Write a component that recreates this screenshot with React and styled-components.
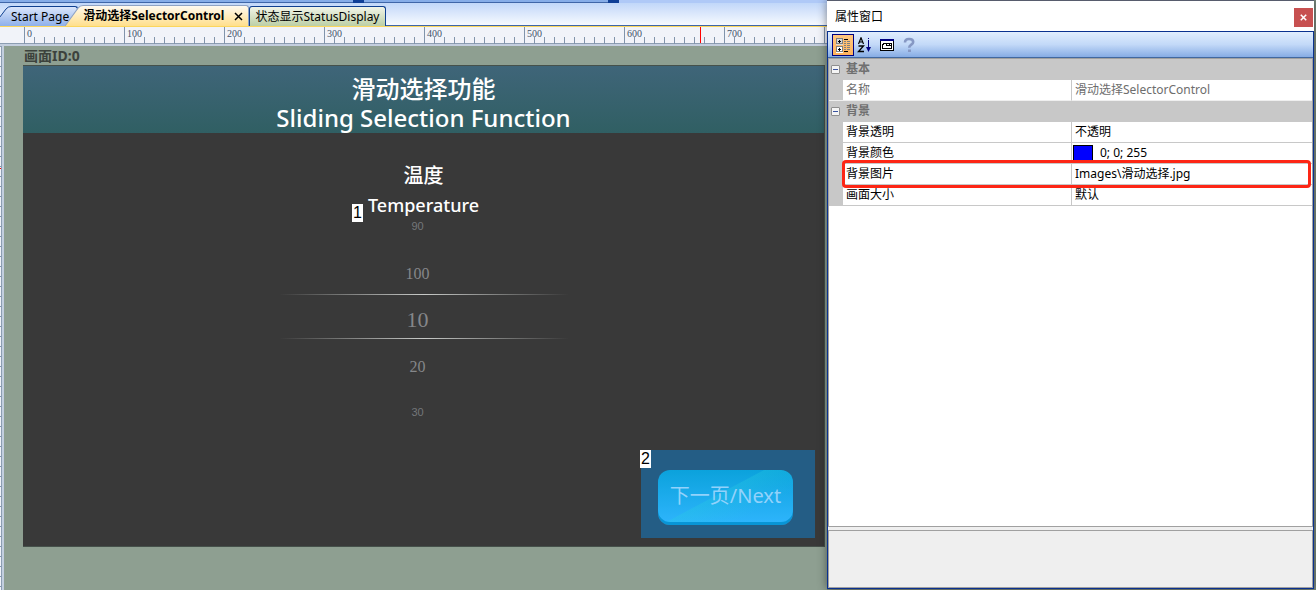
import React, { useState } from "react";
import styled, { createGlobalStyle, css } from "styled-components";

const GlobalStyle = createGlobalStyle`
  * {
    box-sizing: border-box;
  }

  body {
    margin: 0;
    font-family: "Noto Sans", "Noto Sans CJK SC", sans-serif;
    font-size: 12px;
    color: #000;
  }

  button {
    font: inherit;
    color: inherit;
    padding: 0;
    cursor: pointer;
  }
`;

const Page = styled.div`
  display: grid;
  grid-template-columns: minmax(0, 827fr) minmax(0, 487fr);
  min-height: 100vh;
  padding-right: 2px;
  background: #7c8a7f;
`;

const Editor = styled.main`
  display: flex;
  flex-direction: column;
  min-width: 0;
  overflow: hidden;
  background: #8e9f91;
`;

/* ---------- top strip and tabs ---------- */

const TopStrip = styled.div`
  display: flex;
  height: 3px;
  background: #afc9f7;
`;

const StripBar = styled.span`
  flex: ${(props) => props.$grow} 1 0;
  background: #86ade8;
  border-bottom: 1px solid #3f66a8;
`;

const StripGrip = styled.span`
  width: 11px;
  background: #0f3f97;
`;

const StripRest = styled.span`
  flex: 208 1 0;
`;

const TabBar = styled.div`
  display: flex;
  align-items: flex-end;
  height: 24px;
  background: linear-gradient(#c1d7f9, #f9fbff);
  border-bottom: 1px solid #fbd65e;
  box-shadow: inset 0 -1px 0 #3f66a8;
`;

const TabButton = styled.button`
  display: flex;
  height: 20px;
  border: none;
  background: none;
  white-space: nowrap;
  line-height: 18px;
  margin-left: ${(props) => props.$shift || 0}px;

  ${(props) =>
    props.$active &&
    css`
      position: relative;
      height: 21px;
      font-weight: 700;
    `}
`;

const TabEdge = styled.svg`
  display: block;
  flex: none;
  width: 18px;
  height: 100%;
`;

const tabFills = {
  blue: "linear-gradient(#dbe6fb, #8fb0ea)",
  yellow: "linear-gradient(#fffaf0, #ffdf8c)",
  green: "linear-gradient(#f1f4e8, #bccfa5)",
};

const TabBody = styled.span`
  display: flex;
  align-items: center;
  gap: 10px;
  height: 100%;
  padding: 0 ${(props) => props.$padRight || 5}px 0 ${(props) => props.$padLeft || 0}px;
  background: ${(props) => tabFills[props.$tone]};
  border: solid ${(props) => (props.$tone === "yellow" ? "#8fa3c4" : "#0f4090")};
  border-width: 1px 1px 0 ${(props) => (props.$padLeft ? 1 : 0)}px;
  border-radius: ${(props) => (props.$padLeft ? 3 : 0)}px 3px 0 0;
`;

/* ---------- rulers ---------- */

const Ruler = styled.div`
  position: relative;
  display: flex;
  height: 19px;
  padding-left: 24px;
  overflow: hidden;
  background: #f1f3f9;
  border-bottom: 2px solid #c3cede;
  box-shadow: inset 0 -1px 0 #8c9db2;
`;

const RulerStep = styled.span`
  flex: none;
  width: 100px;
  height: 17px;
  padding-left: 2px;
  border-left: 1px solid #8194ab;
  font-family: "Liberation Serif", serif;
  font-size: 10px;
  line-height: 13px;
  color: #44546c;
  background: repeating-linear-gradient(90deg, transparent 0 9px, #8194ab 9px 10px)
    0 10px / 100% 7px no-repeat;
`;

const RulerMark = styled.span`
  position: absolute;
  left: 700px;
  top: 0;
  width: 1px;
  height: 16px;
  background: #f00;
`;

const SideRuler = styled.div`
  position: relative;
  flex: none;
  width: 4px;
  background: repeating-linear-gradient(#f1f3f9 0 9px, #8194ab 9px 10px) 0 1px / 1px 100% no-repeat,
    linear-gradient(90deg, #8c9db2 0 2px, #c3cede 2px);
`;

const SideMark = styled.span`
  position: absolute;
  left: 0;
  top: 122px;
  width: 1px;
  height: 1px;
  background: #f00;
`;

const Workspace = styled.div`
  display: flex;
  flex: 1;
`;

const Stage = styled.div`
  flex: 1;
  min-width: 0;
  padding: 0 2px 0 19px;
`;

const ScreenLabel = styled.div`
  height: 19px;
  padding-left: 1px;
  font-size: 14px;
  font-weight: 700;
  line-height: 20px;
  color: #3c423c;
`;

/* ---------- designed screen ---------- */

const Screen = styled.section`
  display: flex;
  flex-direction: column;
  min-height: 482px;
  background: #393939;
  border: 1px solid #46514b;
  border-width: 1px 1px 1px 0;
  color: #fff;
`;

const ScreenHeader = styled.header`
  padding: 8px 0 1px;
  background: linear-gradient(#3f6579, #305f63);
  text-align: center;
`;

const ScreenTitle = styled.h1`
  margin: 0;
  font-size: 24px;
  font-weight: 500;
  line-height: 29px;
`;

const ScreenBody = styled.div`
  display: flex;
  flex: 1;
  flex-direction: column;
  align-items: center;
  padding-top: 27px;
`;

const Caption = styled.div`
  position: relative;
  font-size: ${(props) => props.$size}px;
  line-height: ${(props) => props.$line}px;
  font-weight: 500;
`;

const Badge = styled.span`
  position: absolute;
  left: ${(props) => props.$left}px;
  top: ${(props) => props.$top}px;
  width: 11px;
  height: 18px;
  background: #fff;
  color: #000;
  font-family: "Liberation Sans", sans-serif;
  font-size: 16px;
  font-weight: 400;
  line-height: 18px;
  text-align: center;
`;

const Picker = styled.ul`
  display: flex;
  flex-direction: column;
  width: 288px;
  margin: 0;
  padding: 0;
  list-style: none;
  text-align: center;
`;

const pickerSizes = {
  small: css`
    font-family: "Liberation Sans", sans-serif;
    font-size: 11px;
    line-height: 16px;
    color: #74777a;
  `,
  medium: css`
    font-size: 16px;
    line-height: 40px;
    padding-top: 20px;
  `,
  current: css`
    font-size: 22px;
    line-height: 37px;
    padding-top: 6px;
    border: solid transparent;
    border-width: 1px 0;
    border-image: linear-gradient(90deg, transparent, #c8cac8 50%, transparent) 1;
  `,
  after: css`
    font-size: 16px;
    line-height: 40px;
    padding: 8px 0 17px;
  `,
};

const PickerItem = styled.li`
  font-family: "Liberation Serif", serif;
  color: #85878a;
  ${(props) => pickerSizes[props.$size]}

  && {
    padding-right: 12px;
  }
`;

const NextArea = styled.div`
  position: relative;
  align-self: flex-end;
  margin: auto 9px 8px 0;
  padding: 20px 22px 13px 17px;
  background: #245d85;
`;

const NextButton = styled.button`
  display: block;
  width: 135px;
  height: 55px;
  padding-bottom: 4px;
  border: none;
  border-radius: 12px;
  background: linear-gradient(152deg, transparent 0 44%, rgba(40, 205, 225, 0.3) 45%, transparent 74%),
    linear-gradient(#0ba2dc, #2fb5fd);
  box-shadow: inset 0 -3px 0 #0895d6;
  color: #92d2fb;
  font-size: 20px;
  line-height: 50px;
  white-space: nowrap;
`;

/* ---------- property window ---------- */

const Panel = styled.aside`
  position: relative;
  display: flex;
  flex-direction: column;
  min-width: 0;
  margin-bottom: 1px;
  background: #efefef;
  box-shadow: 0 0 9px rgba(0, 0, 0, 0.45);
`;

const PanelTitle = styled.header`
  display: flex;
  align-items: center;
  justify-content: space-between;
  height: 31px;
  padding: 2px 1px 0 8px;
  border-top: 1px solid #575c6d;
  background: #fff;
`;

const PanelName = styled.h2`
  margin: 0;
  padding-bottom: 2px;
  font-size: 12px;
  font-weight: 400;
`;

const CloseButton = styled.button`
  display: grid;
  place-items: center;
  width: 19px;
  height: 19px;
  border: none;
  background: #c75050;
`;

const PanelFrame = styled.div`
  display: flex;
  flex: 1;
  flex-direction: column;
  border: 1px solid #0a318f;
`;

const Toolbar = styled.div`
  display: flex;
  align-items: center;
  height: 26px;
  padding: 1px 0 0 4px;
  background: linear-gradient(#e0edfe, #c3d9f8 50%, #86ace4);
  border-bottom: 1px solid #41689f;
`;

const ToolButton = styled.button`
  display: grid;
  place-items: center;
  width: 22px;
  height: 22px;
  border: 1px solid ${(props) => (props.$pressed ? "#000080" : "transparent")};
  background: ${(props) => (props.$pressed ? "linear-gradient(#ffc77f, #ffb25c)" : "none")};
`;

const GridBox = styled.div`
  flex: 1;
  margin-bottom: 3px;
  border: 1px solid #a0a0a0;
  background: #fff;
`;

const HelpBox = styled.div`
  height: 58px;
  border: 1px solid #a0a0a0;
`;

const PropertyTable = styled.table`
  width: 100%;
  table-layout: fixed;
  border-collapse: separate;
  border-spacing: 0;

  td,
  th {
    height: 21px;
    padding: 0 3px;
    text-align: left;
    line-height: 18px;
    white-space: nowrap;
    font-weight: 400;
    border-bottom: 1px solid #c8c8c8;
  }
`;

const GutterCol = styled.col`
  width: 14px;
`;

const NameCol = styled.col`
  width: 229px;
`;

const CategoryRow = styled.tr`
  background: #c8c8c8;
  color: #707070;

  && th {
    padding: 0 3px 0 0;
    font-weight: 700;
  }

  && td {
    padding: 0;
  }
`;

const PropertyRow = styled.tr`
  position: relative;
  color: ${(props) => (props.$readOnly ? "#6d6d6d" : "#000")};

  && > :first-child {
    background: #c8c8c8;
    padding: 0;
  }

  && > :nth-child(2) {
    border-right: 1px solid #c8c8c8;
  }

  && > * {
    ${(props) => props.$readOnly && "border-bottom-color: #efefef;"}
  }
`;

const Expander = styled.button`
  display: grid;
  place-items: center;
  width: 9px;
  height: 9px;
  margin-left: 2px;
  border: 1px solid #8f8f8f;
  border-radius: 1px;
  background: #f4f4f4;

  &::before {
    content: "";
    width: 5px;
    height: 1px;
    background: #3a53a0;
  }
`;

const CategoryLabel = styled.span`
  padding-left: 3px;
`;

const ColorValue = styled.span`
  display: flex;
  align-items: center;
  gap: 7px;
  margin-left: -2px;
`;

const Swatch = styled.span`
  width: 20px;
  height: 16px;
  border: 1px solid #000;
  background: #00f;
`;

const Highlight = styled.span`
  position: absolute;
  z-index: 1;
  left: 13px;
  right: 1px;
  top: -4px;
  height: 28px;
  border: 3px solid #fd2615;
  border-radius: 4px;
  pointer-events: none;
`;

const steps = [0, 100, 200, 300, 400, 500, 600, 700];

const pickerItems = [
  { value: 90, size: "small" },
  { value: 100, size: "medium" },
  { value: 10, size: "current" },
  { value: 20, size: "after" },
  { value: 30, size: "small" },
];

const categories = [
  {
    title: "基本",
    rows: [{ name: "名称", value: "滑动选择SelectorControl", readOnly: true }],
  },
  {
    title: "背景",
    rows: [
      { name: "背景透明", value: "不透明" },
      { name: "背景颜色", value: "0; 0; 255", swatch: true },
      { name: "背景图片", value: "Images\\滑动选择.jpg", highlight: true },
      { name: "画面大小", value: "默认" },
    ],
  },
];

const SlantedEdge = ({ id, from, to, line }) => (
  <TabEdge viewBox="0 0 18 20" preserveAspectRatio="none" aria-hidden="true">
    <defs>
      <linearGradient id={id} x1="0" y1="0" x2="0" y2="1">
        <stop offset="0" stopColor={from} />
        <stop offset="1" stopColor={to} />
      </linearGradient>
    </defs>
    <path d="M0 20 L13 3 Q15 .5 18 .5 V20 Z" fill={`url(#${id})`} />
    <path d="M0 20 L13 3 Q15 .5 18 .5" fill="none" stroke={line} />
  </TabEdge>
);

const CategorizedIcon = () => (
  <svg width="16" height="16" shapeRendering="crispEdges" aria-hidden="true">
    <path d="M1 1h7v7H1z" fill="#d8d8d8" />
    <path d="M1 9h7v7H1z" fill="#fff" />
    <path d="M1.500 1.500h6v5h-6zM1.500 9.500h6v5h-6z" fill="none" stroke="#808080" />
    <path d="M3 4.500h3M4.500 3v3M3 12.500h3M4.500 11v3" stroke="#000" />
    <path d="M9 2.500h4M9 14.500h4" stroke="#000" />
    <path d="M9 4.500h2M12 4.500h3M9 6.500h2M12 6.500h3M9 8.500h2M12 8.500h3M9 10.500h2M12 10.500h3M9 12.500h2M12 12.500h3" stroke="#808080" />
  </svg>
);

const SortIcon = () => (
  <svg width="16" height="16" aria-hidden="true">
    <path d="M1.500 7 L4 .8 L6.500 7 M2.300 5h3.400" fill="none" stroke="#000" strokeWidth="1.200" />
    <path d="M1.500 9h5L1.500 14.500h5.500" fill="none" stroke="#000" strokeWidth="1.300" />
    <path d="M11.500 1v1M11.500 3v9" stroke="#000080" shapeRendering="crispEdges" />
    <path d="M9 10h5l-2.500 5z" fill="#000080" />
  </svg>
);

const PagesIcon = () => (
  <svg width="16" height="16" shapeRendering="crispEdges" aria-hidden="true">
    <path d="M1 2h14v12H1z" fill="#000" />
    <path d="M1 2h14v2H1z" fill="#000080" />
    <path d="M2 4h12v9H2z" fill="#fff" />
    <path d="M3.500 11.500v-4h1v-1h3v2h5v3zM8 6.500h2v1M10 6.500h2v2" fill="none" stroke="#000" />
  </svg>
);

const HelpIcon = () => (
  <svg width="16" height="16" aria-hidden="true">
    <path d="M4 5.500C4 2.800 5.600 2 8 2s4.200 1 4.200 3c0 2.800-4 2.600-4 5.800" fill="none" stroke="#8698c4" strokeWidth="2.600" />
    <path d="M7 12.500h3v2.500H7z" fill="#8698c4" />
  </svg>
);

const CrossIcon = ({ color, size, weight }) => (
  <svg width={size} height={size} viewBox="0 0 9 9" aria-hidden="true">
    <path d="M1 1l7 7M8 1L1 8" stroke={color} strokeWidth={weight} />
  </svg>
);

const App = () => {
  const [closed, setClosed] = useState({});

  const toggle = (title) => {
    setClosed({ ...closed, [title]: !closed[title] });
  };

  return (
    <>
      <GlobalStyle />
      <Page>
        <Editor>
          <TopStrip>
            <StripBar $grow={353} />
            <StripGrip />
            <StripBar $grow={244} />
            <StripGrip />
            <StripRest />
          </TopStrip>
          <TabBar>
            <TabButton type="button" $shift={-7}>
              <SlantedEdge id="edge-blue" from="#dbe6fb" to="#8fb0ea" line="#0f4090" />
              <TabBody $tone="blue" $padRight={8}>Start Page</TabBody>
            </TabButton>
            <TabButton type="button" $active $shift={-13}>
              <SlantedEdge id="edge-yellow" from="#fffaf0" to="#ffdf8c" line="#8fa3c4" />
              <TabBody $tone="yellow">
                滑动选择SelectorControl
                <CrossIcon color="#000" size={9} weight={1.5} />
              </TabBody>
            </TabButton>
            <TabButton type="button">
              <TabBody $tone="green" $padLeft={5}>状态显示StatusDisplay</TabBody>
            </TabButton>
          </TabBar>
          <Ruler>
            {steps.map((step) => (
              <RulerStep key={step}>{step}</RulerStep>
            ))}
            <RulerStep />
            <RulerMark />
          </Ruler>
          <Workspace>
            <SideRuler>
              <SideMark />
            </SideRuler>
            <Stage>
              <ScreenLabel>画面ID:0</ScreenLabel>
              <Screen>
                <ScreenHeader>
                  <ScreenTitle>
                    滑动选择功能
                    <br />
                    Sliding Selection Function
                  </ScreenTitle>
                </ScreenHeader>
                <ScreenBody>
                  <Caption $size={20} $line={32}>温度</Caption>
                  <Caption $size={18} $line={26}>
                    <Badge $left={-16} $top={12}>1</Badge>
                    Temperature
                  </Caption>
                  <Picker>
                    {pickerItems.map((item) => (
                      <PickerItem key={item.value} $size={item.size}>{item.value}</PickerItem>
                    ))}
                  </Picker>
                  <NextArea>
                    <Badge $left={-1} $top={0}>2</Badge>
                    <NextButton type="button">下一页/Next</NextButton>
                  </NextArea>
                </ScreenBody>
              </Screen>
            </Stage>
          </Workspace>
        </Editor>

        <Panel>
          <PanelTitle>
            <PanelName>属性窗口</PanelName>
            <CloseButton type="button" aria-label="关闭">
              <CrossIcon color="#fff" size={7} weight={2} />
            </CloseButton>
          </PanelTitle>
          <PanelFrame>
            <Toolbar>
              <ToolButton type="button" $pressed aria-label="按分类顺序"><CategorizedIcon /></ToolButton>
              <ToolButton type="button" aria-label="字母顺序"><SortIcon /></ToolButton>
              <ToolButton type="button" aria-label="属性页"><PagesIcon /></ToolButton>
              <ToolButton type="button" aria-label="帮助"><HelpIcon /></ToolButton>
            </Toolbar>
            <GridBox>
              <PropertyTable>
                <colgroup>
                  <GutterCol />
                  <NameCol />
                  <col />
                </colgroup>
                {categories.map((category) => (
                  <tbody key={category.title}>
                    <CategoryRow>
                      <td>
                        <Expander
                          type="button"
                          aria-label={category.title}
                          onClick={() => toggle(category.title)}
                        />
                      </td>
                      <th colSpan={2}>
                        <CategoryLabel>{category.title}</CategoryLabel>
                      </th>
                    </CategoryRow>
                    {!closed[category.title] &&
                      category.rows.map((row) => (
                        <PropertyRow key={row.name} $readOnly={row.readOnly}>
                          <td>{row.highlight && <Highlight />}</td>
                          <th scope="row">{row.name}</th>
                          <td>
                            {row.swatch ? (
                              <ColorValue>
                                <Swatch />
                                {row.value}
                              </ColorValue>
                            ) : (
                              row.value
                            )}
                          </td>
                        </PropertyRow>
                      ))}
                  </tbody>
                ))}
              </PropertyTable>
            </GridBox>
            <HelpBox />
          </PanelFrame>
        </Panel>
      </Page>
    </>
  );
};

export default App;
